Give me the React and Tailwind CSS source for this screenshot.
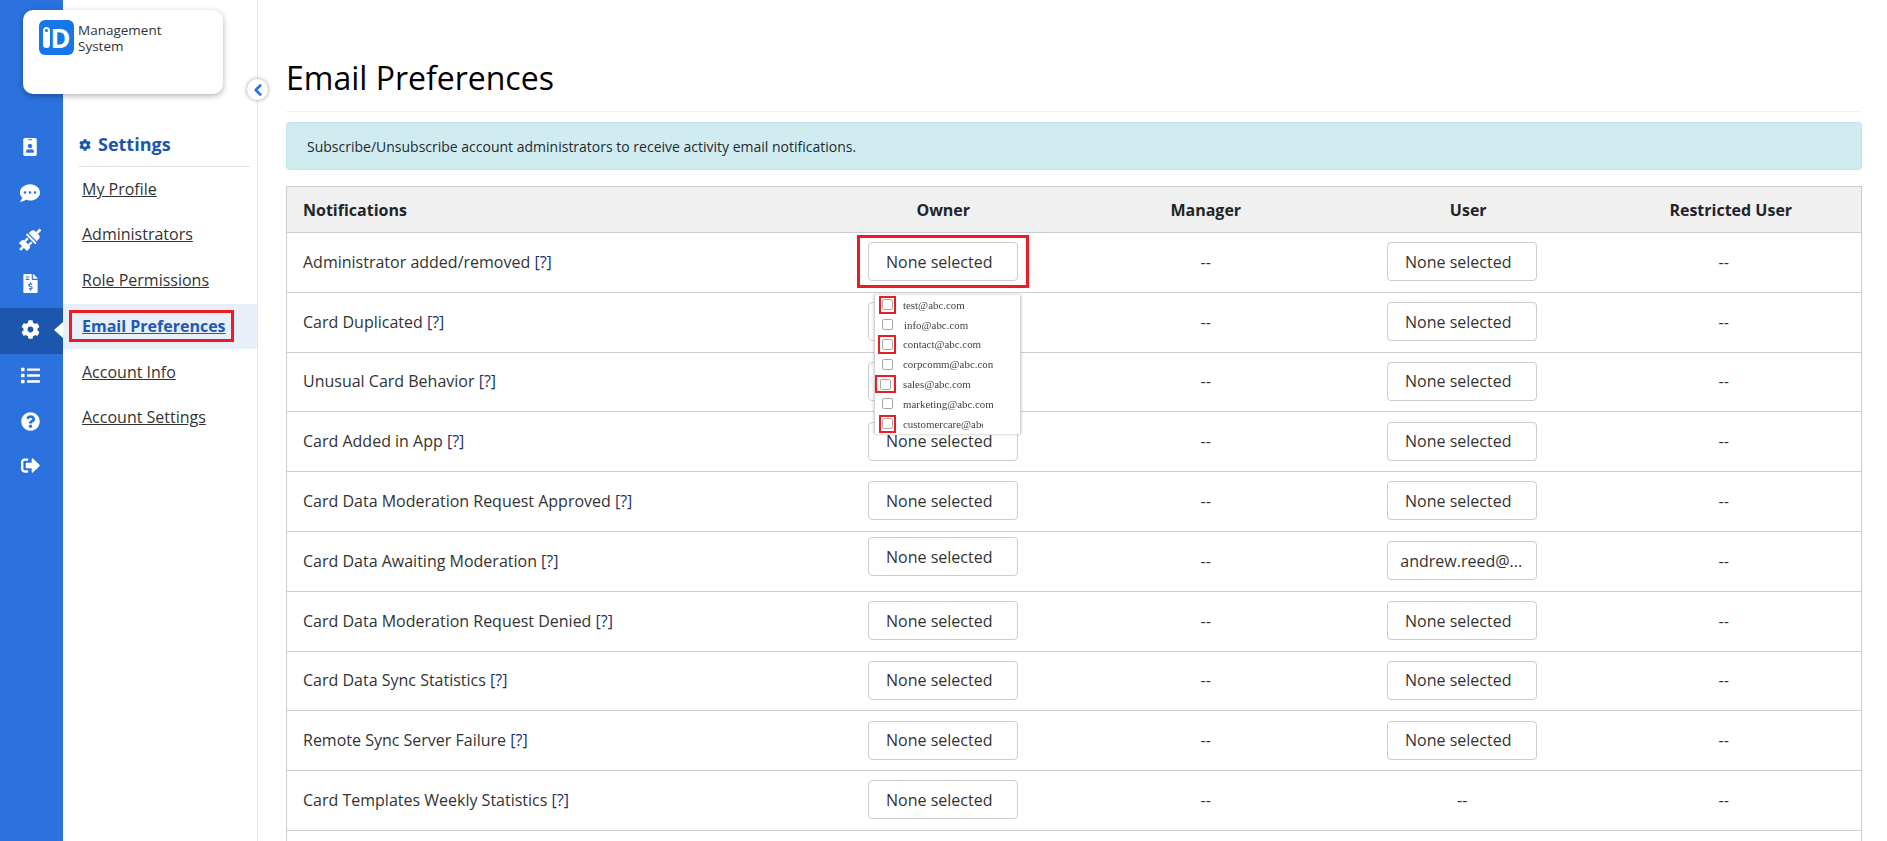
import { ChevronLeft } from 'lucide-react';
import {
  FaCog,
  FaCommentDots,
  FaFileInvoiceDollar,
  FaIdBadge,
  FaList,
  FaQuestionCircle,
  FaSignOutAlt,
} from 'react-icons/fa';

const openSans = { fontFamily: '"Open Sans", sans-serif' };

function PlugIcon() {
  return (
    <svg width="27" height="27" viewBox="0 0 24 24" fill="white">
      <g transform="rotate(-45 12 12)">
        <rect x="-1" y="10.8" width="4" height="2.4" />
        <path d="M2.5 7h3a2 2 0 0 1 2 1.5v7a2 2 0 0 1-2 1.5h-3z" />
        <rect x="7.5" y="8.6" width="3.5" height="2" />
        <rect x="7.5" y="13.4" width="3.5" height="2" />
        <rect x="12" y="6" width="1.8" height="12" rx="0.8" />
        <path d="M14.8 7h2.2a3.2 3.2 0 0 1 3.2 3v4a3.2 3.2 0 0 1-3.2 3h-2.2z" />
        <rect x="20" y="10.8" width="4.5" height="2.4" />
      </g>
    </svg>
  );
}

const railItems = [
  { icon: <FaIdBadge size={18} /> },
  { icon: <FaCommentDots size={20} /> },
  { icon: <PlugIcon /> },
  { icon: <FaFileInvoiceDollar size={19} className="mb-1" /> },
  { icon: <FaCog size={19} className="mb-1" />, active: true },
  { icon: <FaList size={19} className="mb-[2px]" /> },
  { icon: <FaQuestionCircle size={19} /> },
  { icon: <FaSignOutAlt size={19} /> },
];

const rows = [
  { label: 'Administrator added/removed', framed: true },
  { label: 'Card Duplicated' },
  { label: 'Unusual Card Behavior' },
  { label: 'Card Added in App' },
  { label: 'Card Data Moderation Request Approved' },
  { label: 'Card Data Awaiting Moderation', lifted: true, user: 'andrew.reed@...' },
  { label: 'Card Data Moderation Request Denied' },
  { label: 'Card Data Sync Statistics' },
  { label: 'Remote Sync Server Failure' },
  { label: 'Card Templates Weekly Statistics', noUser: true },
];

const emails = [
  { text: 'test@abc.com', flagged: true, boxClass: 'px-[1px] py-[1.5px]', textClass: 'ml-[5px]' },
  { text: 'info@abc.com', textClass: 'ml-[6px]' },
  { text: 'contact@abc.com', flagged: true, boxClass: 'px-[1.5px] py-[2px]', textClass: 'ml-[5px]' },
  { text: 'corpcomm@abc.com', textClass: 'ml-[5px] w-[90px]' },
  { text: 'sales@abc.com', flagged: true, boxClass: 'px-[3px] py-[1.5px]', textClass: 'ml-[5px]' },
  { text: 'marketing@abc.com', textClass: 'ml-[5px]' },
  { text: 'customercare@abc.com', flagged: true, boxClass: 'px-[1px] py-[1.5px]', textClass: 'ml-[5px] w-[80px]' },
];

function SelectButton({ text = 'None selected', className = 'pl-[10px] pr-[18px]' }) {
  return (
    <div
      className={`flex h-[39px] w-[150px] items-center justify-center whitespace-nowrap rounded border border-[#cccccc] bg-white text-[16px] text-[#333333] ${className}`}
    >
      {text}
    </div>
  );
}

function EmailDropdown() {
  return (
    <div
      className="absolute left-[587px] top-[108px] z-10 h-[139px] w-[147px] overflow-hidden border-x border-[#d4d4d4] bg-white shadow-[0_0_3px_rgba(0,0,0,0.25)]"
      style={{ fontFamily: '"Liberation Serif", serif' }}
    >
      {emails.map((item) => (
        <div key={item.text} className="flex h-[19.8px] items-center">
          <span className="flex w-[23px] shrink-0 justify-end pr-[2px]">
            <span className={`shrink-0 ${item.flagged ? `border-2 border-[#ed1c24] ${item.boxClass}` : 'p-[3.5px]'}`}>
              <span className="block h-[11px] w-[11px] rounded-[2px] border border-[#a8a8a8] bg-white" />
            </span>
          </span>
          <span className={`overflow-hidden whitespace-nowrap text-[10.9px] text-[#3f3f3f] blur-[0.35px] ${item.textClass}`}>
            {item.text}
          </span>
        </div>
      ))}
    </div>
  );
}

function Row({ row }) {
  return (
    <div className="grid h-[59.8px] shrink-0 grid-cols-[525px_repeat(4,262.5px)] items-center border-b border-[#cccccc] pb-[1.2px] text-[16px] text-[#333333]">
      <div className="pl-[16px]">
        {row.label}
        <span className="text-[#1f2f6b]"> [?]</span>
      </div>
      <div className="flex justify-center">
        {row.framed ? (
          <div className="border-[3px] border-[#ed1c24] px-2 py-1">
            <SelectButton />
          </div>
        ) : (
          <SelectButton className={row.lifted ? 'mb-2 pl-[10px] pr-[18px]' : 'pl-[10px] pr-[18px]'} />
        )}
      </div>
      <div className="text-center">--</div>
      <div className="flex justify-center pr-[12px]">
        {row.noUser ? (
          <span>--</span>
        ) : (
          <SelectButton text={row.user} className={row.user ? 'pl-[13px] pr-[15px]' : 'pl-[10px] pr-[18px]'} />
        )}
      </div>
      <div className="pr-[14px] text-center">--</div>
    </div>
  );
}

// only the top edge of the next row's buttons is on screen
function CutOffRow() {
  return (
    <div className="grid h-[59.8px] grid-cols-[525px_repeat(4,262.5px)] items-center">
      <div />
      <div className="flex justify-center">
        <SelectButton text="" />
      </div>
      <div />
      <div className="flex justify-center pr-[12px]">
        <SelectButton text="" />
      </div>
      <div />
    </div>
  );
}

export default function App() {
  return (
    <div className="relative flex h-screen overflow-hidden bg-white" style={openSans}>
      <div className="w-[63px] shrink-0 bg-[#2b72de] pt-[124px]">
        {railItems.map((item, index) => (
          <div
            key={index}
            className={`relative flex items-center justify-center pr-[3px] text-white ${index < 5 ? 'h-[46px]' : 'h-[44.7px]'} ${item.active ? 'bg-[#1c57ad]' : ''}`}
          >
            {item.icon}
            {item.active ? (
              <span className="absolute right-0 top-[14px] h-0 w-0 border-y-[8px] border-r-[9px] border-y-transparent border-r-white" />
            ) : null}
          </div>
        ))}
      </div>

      <div className="w-[195px] shrink-0 border-r border-[#e6e6e6] pt-[131px]">
        <div className="ml-[16px] mr-[7px] flex items-center gap-[7px] border-b border-[#e0e0e0] pb-[8px] text-[18px] font-bold leading-[27px] text-[#1c55ad]">
          <FaCog size={12} />
          Settings
        </div>
        <nav className="-mt-[1px] text-[16px] text-[#333333]">
          <a className="flex h-[45.6px] items-center pl-[19px] underline">My Profile</a>
          <a className="flex h-[45.6px] items-center pl-[19px] underline">Administrators</a>
          <a className="flex h-[45.6px] items-center pl-[19px] underline">Role Permissions</a>
          <div className="mt-[1px] flex h-[45px] items-center bg-[#e8eff9] pl-[6px]">
            <a className="flex h-[32px] w-[165px] items-center border-[3px] border-[#ed1c24] pl-[10px] font-bold text-[#1c5ab5] underline">
              Email Preferences
            </a>
          </div>
          <a className="flex h-[45.6px] items-center pl-[19px] underline">Account Info</a>
          <a className="flex h-[45.6px] items-center pl-[19px] underline">Account Settings</a>
        </nav>
      </div>

      <main className="min-w-0 flex-1 pl-[28px] pr-[25px] pt-[54px]">
        <h1 className="h-[58px] border-b border-[#f0f0f0] text-[32px] leading-[48px] text-black">Email Preferences</h1>
        <div className="mt-[10px] flex h-[48px] items-center rounded border border-[#bee5eb] bg-[#d1ecf1] pl-[20px] text-[14px] text-[#1c2b30]">
          Subscribe/Unsubscribe account administrators to receive activity email notifications.
        </div>
        <div className="relative mt-[16px] border-x border-t border-[#cccccc]">
          <div className="grid h-[46px] grid-cols-[525px_repeat(4,262.5px)] items-center border-b border-[#cccccc] bg-[#f0f0f0] text-[16px] font-bold text-[#212529]">
            <div className="pl-[16px]">Notifications</div>
            <div className="text-center">Owner</div>
            <div className="text-center">Manager</div>
            <div className="text-center">User</div>
            <div className="text-center">Restricted User</div>
          </div>
          {rows.map((row) => (
            <Row key={row.label} row={row} />
          ))}
          <CutOffRow />
          <EmailDropdown />
        </div>
      </main>

      <div className="absolute left-[23px] top-[10px] h-[84px] w-[200px] rounded-[10px] bg-white shadow-[0_2px_6px_rgba(0,0,0,0.3)]">
        <div className="flex pl-[16px] pt-[10px]">
          <div className="flex h-[35px] w-[35px] items-center justify-center gap-[1px] rounded-[6px] bg-[#1877e8]">
            <span className="relative h-[21px] w-[7px] rounded-full bg-white">
              <span className="absolute left-[2px] top-[2px] h-[3px] w-[3px] rounded-full bg-[#1877e8]" />
            </span>
            <span className="text-[27px] font-bold leading-none text-white">D</span>
          </div>
          <div className="pl-[4px] pt-[2px] text-[13.5px] leading-[16px] text-[#333333]">
            Management
            <br />
            System
          </div>
        </div>
      </div>

      <button className="absolute left-[247px] top-[79px] flex h-[21px] w-[21px] items-center justify-center rounded-full bg-white text-[#2b72de] shadow-[0_0_4px_rgba(0,0,0,0.4)]">
        <ChevronLeft size={18} strokeWidth={3.5} />
      </button>
    </div>
  );
}
